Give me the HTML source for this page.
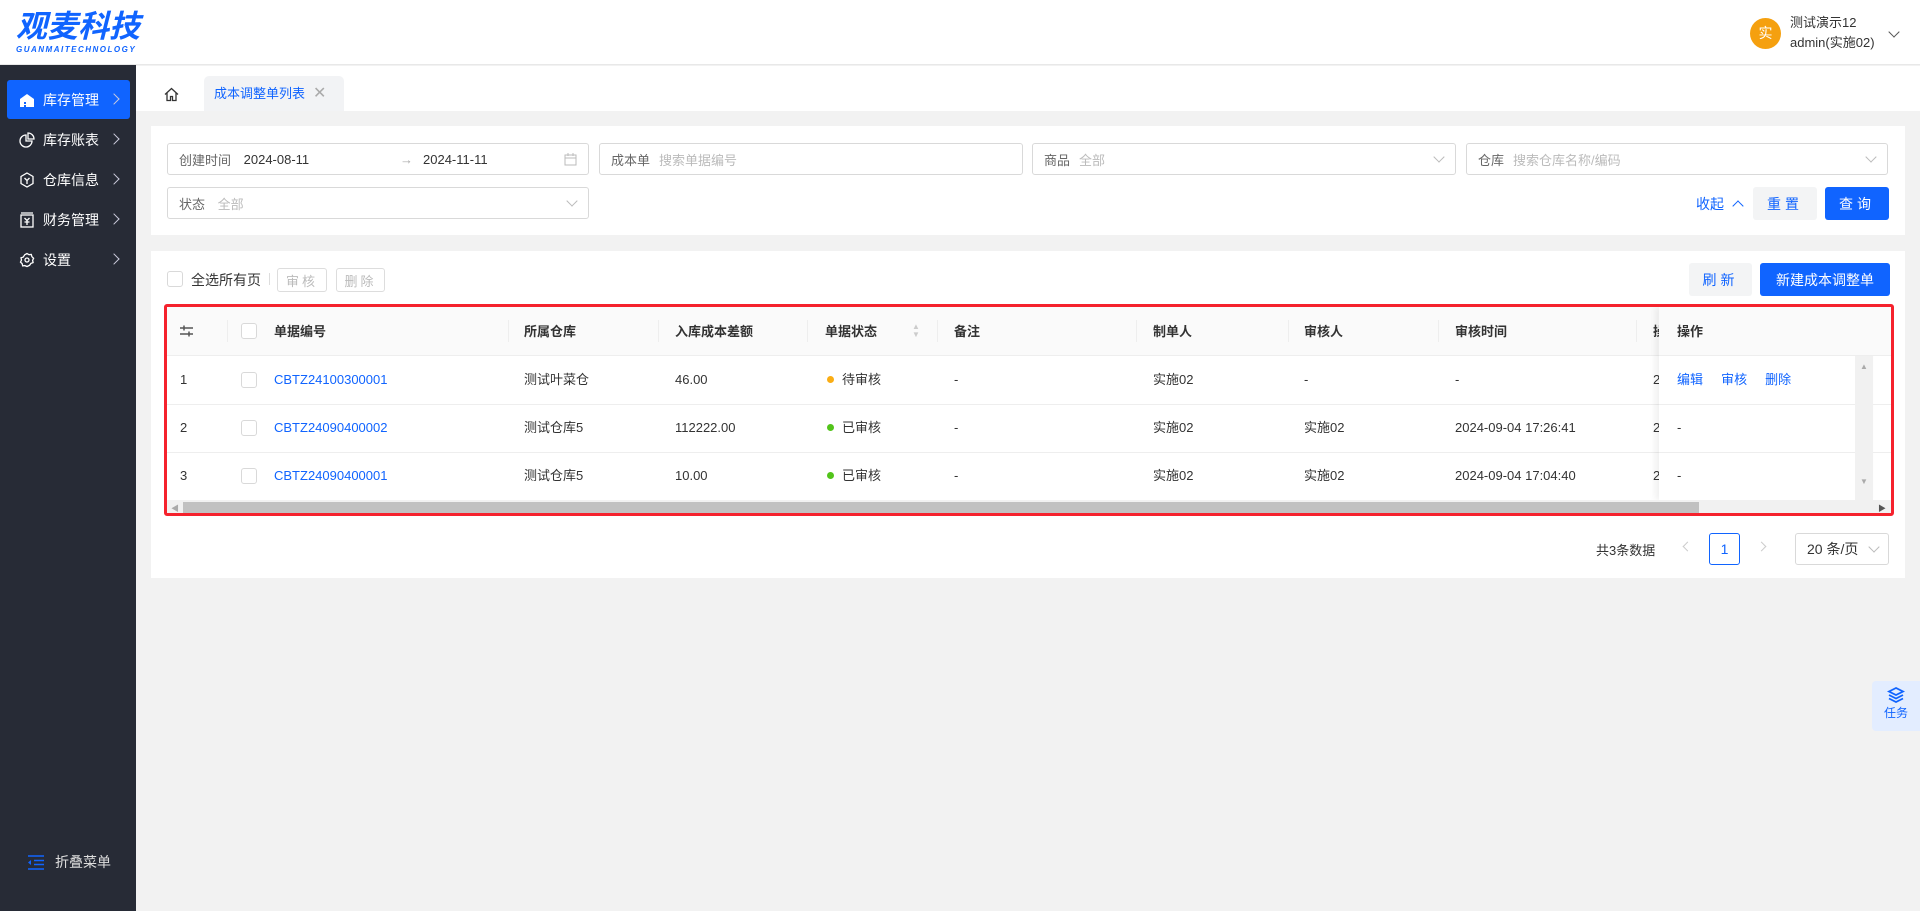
<!DOCTYPE html>
<html><head><meta charset="utf-8">
<style>
*{box-sizing:border-box;margin:0;padding:0}
body{width:1920px;height:911px;overflow:hidden;background:#f2f2f2;font-family:"Liberation Sans","Noto Sans CJK SC",sans-serif;font-size:13px;color:#333;position:relative}
.a{position:absolute}
.hdr{left:0;top:0;width:1920px;height:65px;background:#fff;border-bottom:1px solid #e8e8e8}
.side{left:0;top:65px;width:136px;height:846px;background:#272b36}
.mi{position:absolute;left:7px;width:123px;height:39px;color:#fff;font-size:14px;display:flex;align-items:center;padding-left:12px;border-radius:3px}
.mi svg{margin-right:8px}
.mi .ch{position:absolute;right:12px;top:15px;width:8px;height:8px;border-right:1.5px solid #ccd;border-top:1.5px solid #ccd;transform:rotate(45deg)}
.inp{position:absolute;height:32px;border:1px solid #d9d9d9;border-radius:3px;background:#fff;display:flex;align-items:center;padding-left:11px;color:#333}
.lb{color:#666;margin-right:9px}
.ph{color:#bbb}
.dd{position:absolute;right:12px;top:9px;width:8px;height:8px;border-right:1px solid #bbb;border-bottom:1px solid #bbb;transform:rotate(45deg)}
.btn{position:absolute;display:flex;align-items:center;justify-content:center;border-radius:3px;font-size:14px}
.th{position:absolute;top:0;height:49px;line-height:49px;font-weight:bold;color:#333}
.sep{position:absolute;top:13px;width:1px;height:22px;background:#eee}
.td{position:absolute;line-height:48px}
.cb{position:absolute;width:16px;height:16px;border:1px solid #d9d9d9;border-radius:3px;background:#fff}
.lnk{color:#1064ff}
.dot{display:inline-block;width:7px;height:7px;border-radius:50%;margin-right:8px;vertical-align:1px}
</style></head><body>
<div class="a hdr">
 <div class="a" style="left:16px;top:9px;font-size:31px;font-style:italic;font-weight:bold;color:#1064ff;letter-spacing:0px;line-height:36px">观麦科技</div>
 <div class="a" style="left:16px;top:45px;font-size:8px;font-style:italic;font-weight:bold;color:#1064ff;letter-spacing:1.5px">GUANMAITECHNOLOGY</div>
 <div class="a" style="left:1750px;top:18px;width:31px;height:31px;border-radius:50%;background:#f5a00f;color:#fff;font-size:14px;text-align:center;line-height:31px">实</div>
 <div class="a" style="left:1790px;top:13px;font-size:13px;color:#333;line-height:20px">测试演示12<br>admin(实施02)</div>
 <div class="a" style="left:1890px;top:28px;width:8px;height:8px;border-right:1px solid #555;border-bottom:1px solid #555;transform:rotate(45deg)"></div>
</div>
<div class="a side">
 <div class="mi" style="top:15px;background:#1064ff"><svg width="16" height="16" viewBox="0 0 16 16"><path d="M1 7L8 2l7 5v8H1z" fill="#fff"/><rect x="5" y="10" width="2" height="2" fill="#1064ff"/><rect x="5" y="13" width="2" height="2" fill="#1064ff"/></svg>库存管理<span class="ch"></span></div>
 <div class="mi" style="top:55px"><svg width="16" height="16" viewBox="0 0 16 16" fill="none" stroke="#fff" stroke-width="1.3"><path d="M7 3a6 6 0 1 0 6 6H7z"/><path d="M9 1v6h6a6 6 0 0 0-6-6z"/></svg>库存账表<span class="ch"></span></div>
 <div class="mi" style="top:95px"><svg width="16" height="16" viewBox="0 0 16 16" fill="none" stroke="#fff" stroke-width="1.3"><path d="M8 1l6 3.5v7L8 15l-6-3.5v-7z"/><path d="M5.5 6L8 8.5 10.5 6M8 8.5V12"/></svg>仓库信息<span class="ch"></span></div>
 <div class="mi" style="top:135px"><svg width="16" height="16" viewBox="0 0 16 16" fill="none" stroke="#fff" stroke-width="1.3"><rect x="2" y="3" width="12" height="12"/><path d="M2 1h12M5.5 6L8 8.5 10.5 6M8 8.5v4.5M5.5 10h5"/></svg>财务管理<span class="ch"></span></div>
 <div class="mi" style="top:175px"><svg width="16" height="16" viewBox="0 0 16 16" fill="none" stroke="#fff" stroke-width="1.3"><path d="M8 1.5l2 1.2 2.3-.2.6 2.2 1.7 1.6-1 2 .5 2.3-2.2.8-1.3 1.9L8 14.5l-2.2-.9-2.1.3-.6-2.3-1.6-1.5 1-2-.5-2.3 2.2-.7L5.8 2.7z"/><circle cx="8" cy="8" r="2"/></svg>设置<span class="ch"></span></div>
 <div class="a" style="left:28px;top:787px;display:flex;align-items:center;color:#ddd;font-size:14px"><svg width="17" height="15" viewBox="0 0 17 15" style="margin-right:10px"><path d="M0 1h16M6 5.5h10M6 9.5h10M0 14h16" stroke="#1064ff" stroke-width="1.6"/><path d="M0 7.5l3-2.5v5z" fill="#1064ff"/></svg>折叠菜单</div>
</div>
<div class="a" style="left:136px;top:66px;width:1784px;height:45px;background:#fff"></div>
<svg class="a" style="left:164px;top:87px" width="15" height="15" viewBox="0 0 15 15" fill="none" stroke="#333" stroke-width="1.3"><path d="M1 7.5L7.5 1.5 14 7.5M3 6v7.5h3.5v-4h2v4H12V6"/></svg>
<div class="a" style="left:204px;top:76px;width:140px;height:35px;background:#f2f3f5;border-radius:5px 5px 0 0;color:#1064ff;font-size:13px;line-height:35px;padding-left:10px">成本调整单列表<span style="color:#aaa;font-size:16px;margin-left:8px">✕</span></div>
<div class="a" style="left:151px;top:126px;width:1754px;height:109px;background:#fff">
 <div class="inp" style="left:16px;top:17px;width:422px"><span class="lb">创建时间</span>&nbsp;2024-08-11<span style="position:absolute;left:232px;color:#aaa">→</span><span style="position:absolute;left:255px">2024-11-11</span>
  <svg style="position:absolute;right:11px;top:9px" width="13" height="13" viewBox="0 0 13 13" fill="none" stroke="#bbb"><rect x="1" y="2" width="11" height="10"/><path d="M1 5h11M4 0v3M9 0v3"/></svg></div>
 <div class="inp" style="left:448px;top:17px;width:424px"><span class="lb">成本单</span><span class="ph">搜索单据编号</span></div>
 <div class="inp" style="left:881px;top:17px;width:424px"><span class="lb">商品</span><span class="ph">全部</span><span class="dd"></span></div>
 <div class="inp" style="left:1315px;top:17px;width:422px"><span class="lb">仓库</span><span class="ph">搜索仓库名称/编码</span><span class="dd"></span></div>
 <div class="inp" style="left:16px;top:61px;width:422px"><span class="lb">状态</span>&nbsp;<span class="ph">全部</span><span class="dd"></span></div>
 <div class="a" style="left:1545px;top:68px;color:#1064ff;font-size:14px">收起 <span style="display:inline-block;width:8px;height:8px;border-left:1.5px solid #1064ff;border-top:1.5px solid #1064ff;transform:rotate(45deg);margin-left:6px;vertical-align:-1px"></span></div>
 <div class="btn" style="left:1602px;top:61px;width:64px;height:33px;background:#f3f4f5;color:#1064ff;letter-spacing:4px">重置</div>
 <div class="btn" style="left:1674px;top:61px;width:64px;height:33px;background:#1064ff;color:#fff;letter-spacing:4px">查询</div>
</div>
<div class="a" style="left:151px;top:251px;width:1754px;height:327px;background:#fff">
 <div class="cb" style="left:16px;top:20px"></div>
 <div class="a" style="left:40px;top:19px;font-size:14px">全选所有页</div>
 <div class="a" style="left:118px;top:22px;width:1px;height:12px;background:#ddd"></div>
 <div class="btn" style="left:126px;top:17px;width:50px;height:24px;border:1px solid #ddd;color:#bbb;font-size:13px;letter-spacing:3px">审核</div>
 <div class="btn" style="left:185px;top:17px;width:49px;height:24px;border:1px solid #ddd;color:#bbb;font-size:13px;letter-spacing:3px">删除</div>
 <div class="btn" style="left:1538px;top:12px;width:63px;height:33px;background:#f3f4f5;color:#1064ff;letter-spacing:4px">刷新</div>
 <div class="btn" style="left:1609px;top:12px;width:130px;height:33px;background:#1064ff;color:#fff">新建成本调整单</div>
 <div class="a" style="left:13px;top:53px;width:1730px;height:212px;border:3px solid #f5222d;border-radius:3px;overflow:hidden;background:#fff">
  <div class="a" style="left:0;top:0;width:1724px;height:49px;background:#fafafa;border-bottom:1px solid #eee"></div>
  <svg class="a" style="left:13px;top:18px" width="13" height="12" viewBox="0 0 13 12" stroke="#555" stroke-width="1.5"><path d="M0 3h13M0 9h13M4 0.5v5M9 6.5v5"/></svg>
  <div class="sep" style="left:60px"></div>
  <div class="cb" style="left:74px;top:16px"></div>
  <div class="th" style="left:107px">单据编号</div><div class="sep" style="left:341px"></div>
  <div class="th" style="left:357px">所属仓库</div><div class="sep" style="left:491px"></div>
  <div class="th" style="left:508px">入库成本差额</div><div class="sep" style="left:640px"></div>
  <div class="th" style="left:658px">单据状态</div>
  <div class="a" style="left:745px;top:16px;color:#ccc;font-size:8px;line-height:8px">▲<br>▼</div><div class="sep" style="left:770px"></div>
  <div class="th" style="left:787px">备注</div><div class="sep" style="left:969px"></div>
  <div class="th" style="left:986px">制单人</div><div class="sep" style="left:1121px"></div>
  <div class="th" style="left:1137px">审核人</div><div class="sep" style="left:1271px"></div>
  <div class="th" style="left:1288px">审核时间</div><div class="sep" style="left:1469px"></div>
  <div class="th" style="left:1486px">操</div>
  <div class="a" style="left:0;top:97px;width:1724px;height:1px;background:#eee"></div>
  <div class="a" style="left:0;top:145px;width:1724px;height:1px;background:#eee"></div>
  <div class="td" style="left:13px;top:49px">1</div><div class="cb" style="left:74px;top:65px"></div>
  <div class="td lnk" style="left:107px;top:49px">CBTZ24100300001</div>
  <div class="td" style="left:357px;top:49px">测试叶菜仓</div>
  <div class="td" style="left:508px;top:49px">46.00</div>
  <div class="td" style="left:660px;top:49px"><span class="dot" style="background:#faad14"></span>待审核</div>
  <div class="td" style="left:787px;top:49px">-</div>
  <div class="td" style="left:986px;top:49px">实施02</div>
  <div class="td" style="left:1137px;top:49px">-</div>
  <div class="td" style="left:1288px;top:49px">-</div>
  <div class="td" style="left:1486px;top:49px">2</div>
  <div class="td" style="left:13px;top:97px">2</div><div class="cb" style="left:74px;top:113px"></div>
  <div class="td lnk" style="left:107px;top:97px">CBTZ24090400002</div>
  <div class="td" style="left:357px;top:97px">测试仓库5</div>
  <div class="td" style="left:508px;top:97px">112222.00</div>
  <div class="td" style="left:660px;top:97px"><span class="dot" style="background:#52c41a"></span>已审核</div>
  <div class="td" style="left:787px;top:97px">-</div>
  <div class="td" style="left:986px;top:97px">实施02</div>
  <div class="td" style="left:1137px;top:97px">实施02</div>
  <div class="td" style="left:1288px;top:97px">2024-09-04 17:26:41</div>
  <div class="td" style="left:1486px;top:97px">2</div>
  <div class="td" style="left:13px;top:145px">3</div><div class="cb" style="left:74px;top:161px"></div>
  <div class="td lnk" style="left:107px;top:145px">CBTZ24090400001</div>
  <div class="td" style="left:357px;top:145px">测试仓库5</div>
  <div class="td" style="left:508px;top:145px">10.00</div>
  <div class="td" style="left:660px;top:145px"><span class="dot" style="background:#52c41a"></span>已审核</div>
  <div class="td" style="left:787px;top:145px">-</div>
  <div class="td" style="left:986px;top:145px">实施02</div>
  <div class="td" style="left:1137px;top:145px">实施02</div>
  <div class="td" style="left:1288px;top:145px">2024-09-04 17:04:40</div>
  <div class="td" style="left:1486px;top:145px">2</div>
  <div class="a" style="left:1492px;top:0;width:214px;height:193px;background:#fff;box-shadow:-4px 0 6px rgba(0,0,0,.06)">
   <div class="a" style="left:0;top:0;width:214px;height:49px;background:#fafafa;border-bottom:1px solid #eee"></div>
   <div class="th" style="left:18px">操作</div>
   <div class="a" style="left:0;top:97px;width:196px;height:1px;background:#eee"></div>
   <div class="a" style="left:0;top:145px;width:196px;height:1px;background:#eee"></div>
   <div class="td" style="left:18px;top:49px"><span class="lnk">编辑</span>&nbsp;&nbsp;&nbsp;&nbsp;&nbsp;<span class="lnk">审核</span>&nbsp;&nbsp;&nbsp;&nbsp;&nbsp;<span class="lnk">删除</span></div>
   <div class="td" style="left:18px;top:97px">-</div>
   <div class="td" style="left:18px;top:145px">-</div>
   <div class="a" style="left:196px;top:49px;width:18px;height:144px;background:#f1f1f1"><div style="color:#aaa;font-size:8px;text-align:center;margin-top:6px">▲</div><div style="color:#aaa;font-size:8px;text-align:center;margin-top:106px">▼</div></div>
  </div>
  <div class="a" style="left:0;top:193px;width:1724px;height:16px;background:#f1f1f1">
   <div class="a" style="left:16px;top:2px;width:1516px;height:12px;background:#c1c1c1"></div>
   <div class="a" style="left:4px;top:3px;color:#aaa;font-size:8px">◀</div>
   <div class="a" style="right:5px;top:3px;color:#555;font-size:8px">▶</div>
  </div>
 </div>
 <div class="a" style="left:1445px;top:289px;font-size:13px">共3条数据</div>
 <div class="a" style="left:1533px;top:292px;width:7px;height:7px;border-left:1px solid #ccc;border-bottom:1px solid #ccc;transform:rotate(45deg)"></div>
 <div class="a" style="left:1558px;top:282px;width:31px;height:32px;border:1px solid #1064ff;border-radius:3px;color:#1064ff;text-align:center;line-height:30px;font-size:14px">1</div>
 <div class="a" style="left:1607px;top:292px;width:7px;height:7px;border-right:1px solid #ccc;border-top:1px solid #ccc;transform:rotate(45deg)"></div>
 <div class="a" style="left:1644px;top:282px;width:94px;height:32px;border:1px solid #d9d9d9;border-radius:3px;line-height:30px;padding-left:11px;font-size:14px">20 条/页<span class="dd" style="top:9px;right:10px"></span></div>
</div>
<div class="a" style="left:1872px;top:681px;width:48px;height:50px;background:#e3edff;border-radius:4px 0 0 4px;text-align:center">
 <svg style="margin-top:6px" width="18" height="16" viewBox="0 0 18 16" fill="none" stroke="#1064ff" stroke-width="1.8"><path d="M9 1L2 4.5 9 8l7-3.5z"/><path d="M2 8l7 3.5L16 8M2 11.5L9 15l7-3.5"/></svg>
 <div style="color:#1064ff;font-size:12px;line-height:14px">任务</div>
</div>
</body></html>
